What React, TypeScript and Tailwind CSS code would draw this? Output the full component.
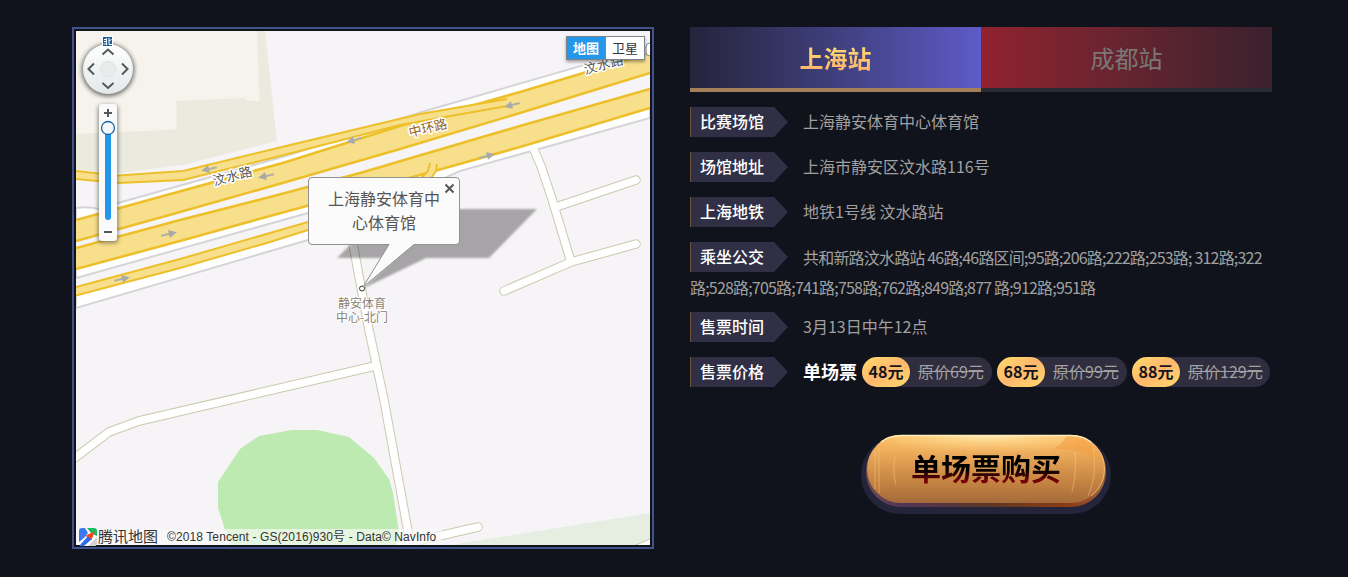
import type { ReactNode } from "react";

const lanes = [
  { top: [[76, 220], [174, 193], [286, 162], [400, 126], [520, 92], [650, 53]], bottom: [[76, 241], [180, 212], [286, 182], [400, 149], [520, 113], [650, 73]] },
  { top: [[76, 248], [180, 220], [270, 197], [360, 173], [520, 126], [650, 89]], bottom: [[76, 269], [180, 241], [270, 216], [420, 175], [520, 147], [650, 108]] },
  { top: [[76, 287], [180, 259], [270, 233], [308, 222], [400, 195], [422, 177], [428, 171], [430, 163]], bottom: [[76, 295.5], [180, 268], [270, 242], [308, 230], [405, 199], [432, 177], [436, 171], [437, 164]] },
  { top: [[76, 171], [118, 175.5], [183, 171], [286, 146], [420, 114], [507, 99]], bottom: [[76, 179], [118, 183], [183, 180], [286, 154.5], [400, 125], [507, 106]] },
];

const pts = (p: number[][]) => p.map((q) => q.join(",")).join(" ");

const streets = [
  "M350 230L353 244L369 330L384 400L411 548",
  "M375 366L139 421L109 432L72 460",
  "M532 145L541 166L552 199L571 262",
  "M556 207L636 180",
  "M504 291L571 262L636 244",
  "M400 545L478 527",
  "M630 552L656 541",
];

const arrows = [
  [209, 169, 167], [266, 176, 167], [169, 234, -13], [122, 279, -13],
  [354, 140, 163], [512, 105, 165], [487, 156, -15],
];

function MapCanvas() {
  return (
    <svg viewBox="76 31 574 514" width="574" height="514" className="block" fontFamily="'Noto Sans CJK SC', sans-serif">
      <defs>
        <filter id="soft" x="-20%" y="-20%" width="140%" height="140%"><feGaussianBlur stdDeviation="1.3" /></filter>
        <filter id="halo" x="-50%" y="-50%" width="200%" height="200%"><feGaussianBlur stdDeviation="2" /></filter>
        <linearGradient id="knob" x1="0" y1="0" x2="0" y2="1"><stop offset="0" stopColor="#fff" /><stop offset="1" stopColor="#e4e8e8" /></linearGradient>
      </defs>
      <rect x="76" y="31" width="574" height="514" fill="#f6f4f6" />
      <path d="M76 31H265L277 141L183 165L120 173L76 170Z" fill="#ebeade" />
      <path d="M76 31H257L259.500 101L245 100.500V98L176.500 101V129.500L76 134Z" fill="#f5f3ec" />
      <path d="M650 513L545 530L450 545H650Z" fill="#e6eee2" />
      <path d="M230 545L218 508V482L240 449L259 436L292 430H317L349 437L374 458L389 479L393 493L401 545Z" fill="#bceab0" />
      {streets.map((d) => <path key={d} d={d} fill="none" stroke="#cbc9af" strokeWidth="9.500" strokeLinecap="round" strokeLinejoin="round" />)}
      <path d="M76 208Q88 206 99 209L118 203L286 156L425 111L650 46V118L460 171L308 240L76 308Z" fill="#fff" stroke="#d5d4d6" strokeWidth="2" />
      <path d="M76 278L308 213L400 187V197L308 222L76 287Z" fill="#f6f4f6" />
      <path d="M76 278L308 213L400 187" fill="none" stroke="#d5d4d6" strokeWidth="2" />
      <polygon points={pts([...lanes[0].bottom, ...[...lanes[1].top].reverse()])} fill="#f6f4f6" />
      {streets.map((d) => <path key={d} d={d} fill="none" stroke="#fff" strokeWidth="7.500" strokeLinecap="round" strokeLinejoin="round" />)}
      {lanes.map((l, i) => (
        <g key={i}>
          <polygon points={pts([...l.top, ...[...l.bottom].reverse()])} fill="#f7df8b" />
          <polyline points={pts(l.top)} fill="none" stroke="#edc02b" strokeWidth={i > 1 ? 2 : 2.6} />
          <polyline points={pts(l.bottom)} fill="none" stroke="#edc02b" strokeWidth={i > 1 ? 2 : 2.6} />
        </g>
      ))}
      {arrows.map(([x, y, r]) => (
        <g key={x} transform={`translate(${x} ${y}) rotate(${r})`}>
          <path d="M-8 0H3" stroke="#b0afac" strokeWidth="2" /><path d="M0 -4L8 0L0 4Z" fill="#a9a9a9" />
        </g>
      ))}
      <g stroke="#fff" strokeWidth="3" strokeLinejoin="round" paintOrder="stroke" fontSize="13" textAnchor="middle">
        <text transform="translate(234 180.500) rotate(-15)" fill="#555" letterSpacing="0.6">汶水路</text>
        <text transform="translate(429 132.500) rotate(-14)" fill="#956326">中环路</text>
        <text transform="translate(605 69) rotate(-15)" fill="#555" letterSpacing="0.6">汶水路</text>
        <g fill="#8a8373" fontSize="12" strokeWidth="2"><text x="362" y="308">静安体育</text><text x="362" y="322">中心-北门</text></g>
      </g>
      <rect x="646" y="43" width="12" height="13" rx="4" fill="#fff" stroke="#888" />

      <path d="M386 209H537L489 258H426L362 289L396 258H337Z" fill="#000" opacity=".32" filter="url(#soft)" />
      <circle cx="362" cy="288.500" r="2.500" fill="#fff" stroke="#333" />
      <path d="M312 177.500H456Q459.500 177.500 459.500 181V241Q459.500 244.500 456 244.500H414L363 287L389 244.500H312Q308.500 244.500 308.500 241V181Q308.500 177.500 312 177.500Z" fill="#fbfbfb" stroke="#919191" />
      <g fill="#555" fontSize="16" textAnchor="middle"><text x="384" y="205">上海静安体育中</text><text x="384" y="229">心体育馆</text></g>
      <path d="M445.500 184.500L453.500 192.500M453.500 184.500L445.500 192.500" stroke="#555" strokeWidth="2" />

      <circle cx="108" cy="70" r="26.500" fill="#333" opacity=".65" filter="url(#halo)" />
      <circle cx="108" cy="69" r="25" fill="url(#knob)" />
      <circle cx="108" cy="69" r="7.500" fill="#e9ebec" stroke="#dfe2e3" />
      <path d="M102.500 54.500L108 49.500L113.500 54.500M102.500 83L108 88L113.500 83M94 63.500L88.500 69L94 74.500M122 63.500L127.500 69L122 74.500" fill="none" stroke="#51585c" strokeWidth="2" />
      <rect x="102.500" y="36.500" width="10" height="10" fill="#145f9e" stroke="#fff" />
      <path d="M104 39.500H106.500M104 41.500H106.500M103.500 44H106.500M106.500 38V45M109 38V44.500H112M109 41L111.500 39.500" fill="none" stroke="#fff" />
      <rect x="98" y="105" width="20" height="138" rx="4" fill="#333" opacity=".55" filter="url(#halo)" />
      <rect x="99" y="104" width="18" height="137" rx="3" fill="#fafafa" />
      <path d="M104 113H112M108 109V117M104 232H112" stroke="#51585c" strokeWidth="2" />
      <path d="M108 128V217" stroke="#2497eb" strokeWidth="6" strokeLinecap="round" />
      <circle cx="108" cy="128" r="6.500" fill="#f4f6f7" stroke="#1b66a8" strokeWidth="1.300" />
    </svg>
  );
}

function TencentMark() {
  return (
    <svg width="19" height="19" viewBox="0 0 19 19" className="shrink-0">
      <path d="M3 0H8L12 6L18 9V15Q18 18 15 18H3Q0 18 0 15V3Q0 0 3 0Z" fill="#fff" />
      <path d="M3 0H6L9 5L5 10L0 14V3Q0 0 3 0Z" fill="#3b79f1" />
      <path d="M8 0H15Q18 0 18 3V8L12 5Z" fill="#16bd62" />
      <path d="M18 9V15Q18 18 15 18H9Z" fill="#d2d2d2" />
      <path d="M1 17L9 8L13 11L5 18Q2 19 1 17Z" fill="#2f6bea" />
      <path d="M16 3L12.500 12L10.500 9.500L6 8Z" fill="#f04a25" />
    </svg>
  );
}

function MapPanel() {
  return (
    <div className="relative h-[522px] w-[582px] shrink-0 border-2 border-[#42538c] p-[2px]">
      <MapCanvas />
      <div className="absolute left-[492px] top-[7px] flex h-6 w-[79px] border border-[#7d858c] bg-white text-center text-[13px] leading-[21px] shadow-[0_2px_3px_rgba(0,0,0,0.35)]">
        <span className="w-[38px] bg-[#2497eb] font-bold text-white">地图</span>
        <span className="w-[39px] border-l border-[#7d858c] text-[#333]">卫星</span>
      </div>
      <div className="absolute bottom-[2px] left-[2px] flex h-4 w-[366px] items-center bg-[#fafafa]/65 pl-[3px] text-[#333]">
        <TencentMark />
        <span className="-mt-0.5 text-[15px] leading-4">腾讯地图</span>
        <span className="ml-[9px] whitespace-nowrap font-['Liberation_Sans','Noto_Sans_CJK_SC',sans-serif] text-[12px] leading-4 tracking-[0.1px]">©2018 Tencent - GS(2016)930号 - Data© NavInfo</span>
      </div>
    </div>
  );
}

function Label({ children }: { children: ReactNode }) {
  return (
    <span className="mr-[15px] inline-flex h-[30px] w-[98px] shrink-0 align-top leading-[28px]">
      <span className="w-px bg-[#6d5339]" />
      <span className="flex-1 bg-[#302f46] pl-[9px] font-medium tracking-normal text-white [clip-path:polygon(0_0,83px_0,100%_50%,83px_100%,0_100%)]">{children}</span>
    </span>
  );
}

function Row({ label, children }: { label: string; children: ReactNode }) {
  return (
    <div className="mb-[15px] flex h-[30px] whitespace-nowrap leading-[28px]">
      <Label>{label}</Label>
      {children}
    </div>
  );
}

const prices = [
  { now: "48元", was: "原价69元", width: "w-[130px]" },
  { now: "68元", was: "原价99元", width: "w-[130px]" },
  { now: "88元", was: "原价129元", width: "w-[138px]" },
];

function BuyButton() {
  return (
    <button className="relative ml-[171px] mt-[47px] block h-20 w-[250px]">
      <svg width="250" height="80" viewBox="0 0 250 80" className="block">
        <defs>
          <linearGradient id="gold" x1="0" y1="0" x2="0" y2="1">
            <stop offset="0" stopColor="#ffc46c" /><stop offset=".3" stopColor="#e9a757" /><stop offset=".65" stopColor="#c88743" /><stop offset="1" stopColor="#a56a3a" />
          </linearGradient>
          <radialGradient id="shine" cx=".5" cy="0" r=".65">
            <stop offset="0" stopColor="#fff3c8" stopOpacity=".95" /><stop offset=".45" stopColor="#ffe09a" stopOpacity=".55" /><stop offset="1" stopColor="#ffd080" stopOpacity="0.05" />
          </radialGradient>
          <linearGradient id="edge"><stop offset="0" stopColor="#6d4a50" /><stop offset=".15" stopColor="#52345a" /><stop offset=".5" stopColor="#5c3625" /><stop offset=".85" stopColor="#8c3c14" /><stop offset="1" stopColor="#9a6540" /></linearGradient>
          <clipPath id="pill"><rect x="6" y="1" width="238" height="68" rx="34" /></clipPath>
        </defs>
        <rect y="2" width="250" height="78" rx="39" fill="#24243a" />
        <rect x="5" y="2" width="240" height="71" rx="35" fill="url(#edge)" />
        <rect x="6" y="1" width="238" height="68" rx="34" fill="url(#gold)" />
        <g clipPath="url(#pill)">
          <path d="M28 0Q44 24 70 20Q130 42 212 16L224 0Z" fill="url(#shine)" />
          <path d="M207 0Q200 12 192 15Q218 14 240 28L224 0Z" fill="#f49c43" opacity=".55" />
          <path d="M14 17V55M18 12V59M34 23Q31 38 35 51M214 18Q216 38 211 58M232 14Q237 38 227 62" fill="none" stroke="#ffd18a" strokeWidth="1.300" opacity=".35" />
        </g>
        <path d="M20 8Q28 1.500 40 1.500H210Q222 1.500 230 8" fill="none" stroke="#ffedb7" strokeWidth="1.500" />
        <path d="M230 8Q243.500 18 243.500 35Q243.500 52 230 62" fill="none" stroke="#ffc277" opacity=".8" />
      </svg>
      <span className="absolute left-[50px] top-[10px] bg-linear-to-b from-black from-50% to-[#760006] to-80% bg-clip-text text-[30px] font-bold leading-[46px] text-transparent">单场票购买</span>
    </button>
  );
}

export default function App() {
  return (
    <main className="flex h-[577px] w-[1348px] gap-9 overflow-hidden bg-[#10131c] pl-[72px] pt-[27px] font-['Noto_Sans_CJK_SC',sans-serif]">
      <MapPanel />
      <section className="w-[582px] text-[16px] leading-[30px] text-[#a0a0a0]">
        <div className="mb-[15px] grid h-[65px] grid-cols-2 text-center text-[24px] leading-[61px]">
          <div className="border-b-4 border-[#a48058] bg-linear-to-r from-[#25243c] to-[#5d5bc8]">
            <span className="inline-block bg-linear-to-b from-[#ffdc6e] from-30% to-[#ffb16b] to-75% bg-clip-text align-top font-bold text-transparent">上海站</span>
          </div>
          <div className="border-b-4 border-[#2a2a35] bg-linear-to-r from-[#91212f] to-[#3b202d] text-[#7a7876]">成都站</div>
        </div>
        <Row label="比赛场馆">上海静安体育中心体育馆</Row>
        <Row label="场馆地址">上海市静安区汶水路116号</Row>
        <Row label="上海地铁">地铁1号线 汶水路站</Row>
        <p className="mb-[10px] whitespace-nowrap tracking-[-0.81px]">
          <Label>乘坐公交</Label>共和新路汶水路站 46路;46路区间;95路;206路;222路;253路; 312路;322<br />
          路;528路;705路;741路;758路;762路;849路;877 路;912路;951路
        </p>
        <Row label="售票时间">3月13日中午12点</Row>
        <Row label="售票价格">
          <strong className="text-[18px] leading-[29px] text-white">单场票</strong>
          {prices.map((p) => (
            <span key={p.now} className={`ml-[5px] flex h-[30px] rounded-full bg-[#302d3f] ${p.width}`}>
              <b className="mr-2 w-12 rounded-full bg-linear-to-br from-[#ffdc6c] via-[#ffb76c] to-[#ffdc6c] text-center text-[#15151d]">{p.now}</b>
              <s>{p.was}</s>
            </span>
          ))}
        </Row>
        <BuyButton />
      </section>
    </main>
  );
}
